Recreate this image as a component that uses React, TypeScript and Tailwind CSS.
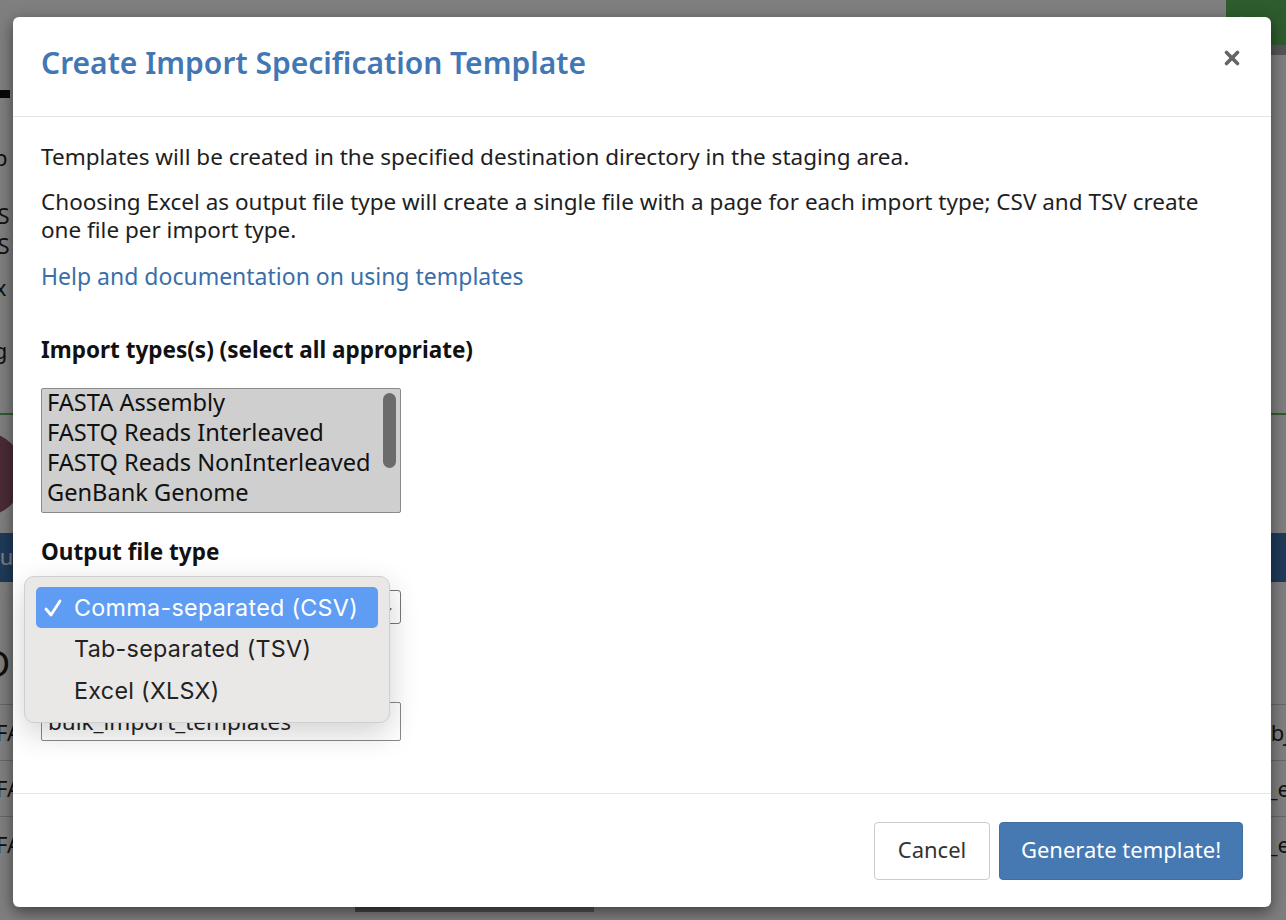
import { X } from 'lucide-react'

const ui = { fontFamily: '"Noto Sans", "Open Sans", sans-serif' }
const sys = { fontFamily: 'Inter, "Liberation Sans", sans-serif' }

const importTypes = ['FASTA Assembly', 'FASTQ Reads Interleaved', 'FASTQ Reads NonInterleaved', 'GenBank Genome']
const fileTypes = ['Comma-separated (CSV)', 'Tab-separated (TSV)', 'Excel (XLSX)']

function PageBehind() {
  // the page under the dimmed backdrop; only its edges show
  return (
    <div className="flex h-full w-full flex-col bg-white text-[22px] text-[#222]" style={ui}>
      <div className="flex h-[45px] justify-end">
        <div className="flex w-[60px] items-center bg-[#5cb85c] pl-[12px] text-white">t r</div>
      </div>
      <div className="flex h-[10px] justify-end">
        <div className="w-[50px] bg-[#aaa]" />
      </div>
      <div className="flex h-[45px] items-end">
        <div className="mb-[2px] h-[8px] w-[10px] bg-[#111]" />
      </div>
      <div className="flex flex-col overflow-hidden leading-[30px]">
        <div className="-ml-[52px] mt-[42px]">Setup</div>
        <div className="-ml-[40px] mt-[28px]">TSVS</div>
        <div className="-ml-[40px]">TSVS</div>
        <div className="-ml-[28px] mt-[12px]">Tex</div>
        <div className="-ml-[38px] mt-[33px]">Targ</div>
      </div>
      <div className="mt-[48px] h-[2px] bg-[#5cb85c]" />
      <div className="flex h-[118px] items-center">
        <div className="-ml-[62px] h-[86px] w-[86px] rounded-full bg-[#94566f]" />
      </div>
      <div className="flex h-[46px] items-center overflow-hidden bg-[#3f74b4] text-white">
        <span className="-ml-[14px]">Run</span>
      </div>
      <div className="h-[3px] bg-[#3f74b4]" />
      <div className="-ml-[16px] mt-[62px] text-[36px] leading-[40px]">D</div>
      <div className="mt-[20px] flex flex-col">
        {['obj', '_e', '_e'].map((r, i) => (
          <div key={i} className="flex h-[56px] items-center justify-between border-t border-[#ccc]">
            <span className="-ml-[4px]">FA</span>
            <span className="-mr-[4px]">{r}</span>
          </div>
        ))}
      </div>
      <div className="flex">
        <div className="ml-[355px] h-[40px] w-[45px] bg-[#888]" />
        <div className="flex h-[40px] w-[194px] items-center justify-center bg-[#9fa6ad] text-[#0d2a4a]">+ ADD ROW</div>
      </div>
    </div>
  )
}

function Check() {
  return (
    <svg viewBox="0 0 20 20" className="h-[20px] w-[20px]" fill="none" stroke="currentColor" strokeWidth={2.8} strokeLinecap="round" strokeLinejoin="round">
      <path d="M3 11 L8 17 L17 3" />
    </svg>
  )
}

export default function App() {
  return (
    <div className="relative h-[920px] w-[1286px] overflow-hidden">
      <PageBehind />
      <div className="absolute inset-0 bg-black/50" />

      <div
        className="absolute left-[13px] top-[17px] flex h-[890px] w-[1258px] flex-col rounded-[6px] bg-white shadow-[0_5px_15px_rgba(0,0,0,0.5)]"
        style={ui}
      >
        {/* Header */}
        <div className="flex h-[100px] items-center justify-between border-b border-[#e5e5e5] pb-[7px] pl-[28px] pr-[28px]">
          <h4 className="text-[30px] font-semibold leading-[36px] text-[#4277b4]">Create Import Specification Template</h4>
          <button className="mb-[10px] text-[#666]">
            <X className="h-[22px] w-[22px]" strokeWidth={4} />
          </button>
        </div>

        {/* Body */}
        <div className="relative flex-1 px-[28px] pt-[26px] text-[22.5px] leading-[28px] text-[#1e1e1e]">
          <p className="mb-[17px]">Templates will be created in the specified destination directory in the staging area.</p>
          <p className="mb-[18px]">
            Choosing Excel as output file type will create a single file with a page for each import type; CSV and TSV create one file per import type.
          </p>
          <a className="text-[23px] text-[#3a6ea8]">Help and documentation on using templates</a>

          <label className="mt-[45px] block font-bold text-[#111]">Import types(s) (select all appropriate)</label>
          <div className="relative mt-[24px] h-[125px] w-[360px] overflow-hidden rounded-[2px] border border-[#8a8a8a] bg-[#cfcfcf] pl-[5px] text-[23.6px] leading-[30px] text-[#111]">
            <div className="-mt-[2px]">
              {importTypes.map(t => (
                <div key={t}>{t}</div>
              ))}
            </div>
            <div className="absolute right-[4px] top-[4px] h-[75px] w-[13px] rounded-full bg-[#6b6b6b]" />
          </div>

          <label className="mt-[25px] block font-bold text-[#111]">Output file type</label>
          <div className="mt-[24px] flex h-[34px] w-[360px] items-center justify-between rounded-[3px] border border-[#777] px-[6px]">
            <span>Comma-separated (CSV)</span>
            <span className="text-[12px]">⌄</span>
          </div>

          <label className="mt-[26px] block font-bold text-[#111]">Destination directory</label>
          <div className="mt-[24px] flex h-[39px] w-[360px] items-center rounded-[2px] border border-[#888] px-[6px] text-[#222]">
            bulk_import_templates
          </div>

          {/* open select menu */}
          <div
            className="absolute left-[11px] top-[459px] w-[366px] rounded-[10px] border border-[#cfcfcf] bg-[#e9e8e6] px-[11px] pb-[10px] pt-[10px] shadow-[0_10px_30px_rgba(0,0,0,0.18)]"
            style={sys}
          >
            {fileTypes.map((f, i) => (
              <div
                key={f}
                className={
                  i === 0
                    ? 'flex h-[41px] items-center rounded-[5px] bg-[#5f9cf3] text-[23.3px] tracking-[0.3px] text-white'
                    : 'flex h-[42px] items-center text-[23.3px] tracking-[0.3px] text-[#222]'
                }
              >
                <span className="flex w-[38px] justify-center pr-[4px]">{i === 0 && <Check />}</span>
                {f}
              </div>
            ))}
          </div>
        </div>

        {/* Footer */}
        <div className="flex justify-end gap-[9px] border-t border-[#e5e5e5] pb-[27px] pl-[28px] pr-[28px] pt-[28px] text-[22px]">
          <button className="h-[58px] w-[116px] rounded-[4px] border border-[#ccc] bg-white pb-[4px] text-[#333]">Cancel</button>
          <button className="h-[58px] w-[244px] rounded-[4px] border border-[#3f6ea3] bg-[#4679b2] pb-[4px] text-white">
            Generate template!
          </button>
        </div>
      </div>
    </div>
  )
}
